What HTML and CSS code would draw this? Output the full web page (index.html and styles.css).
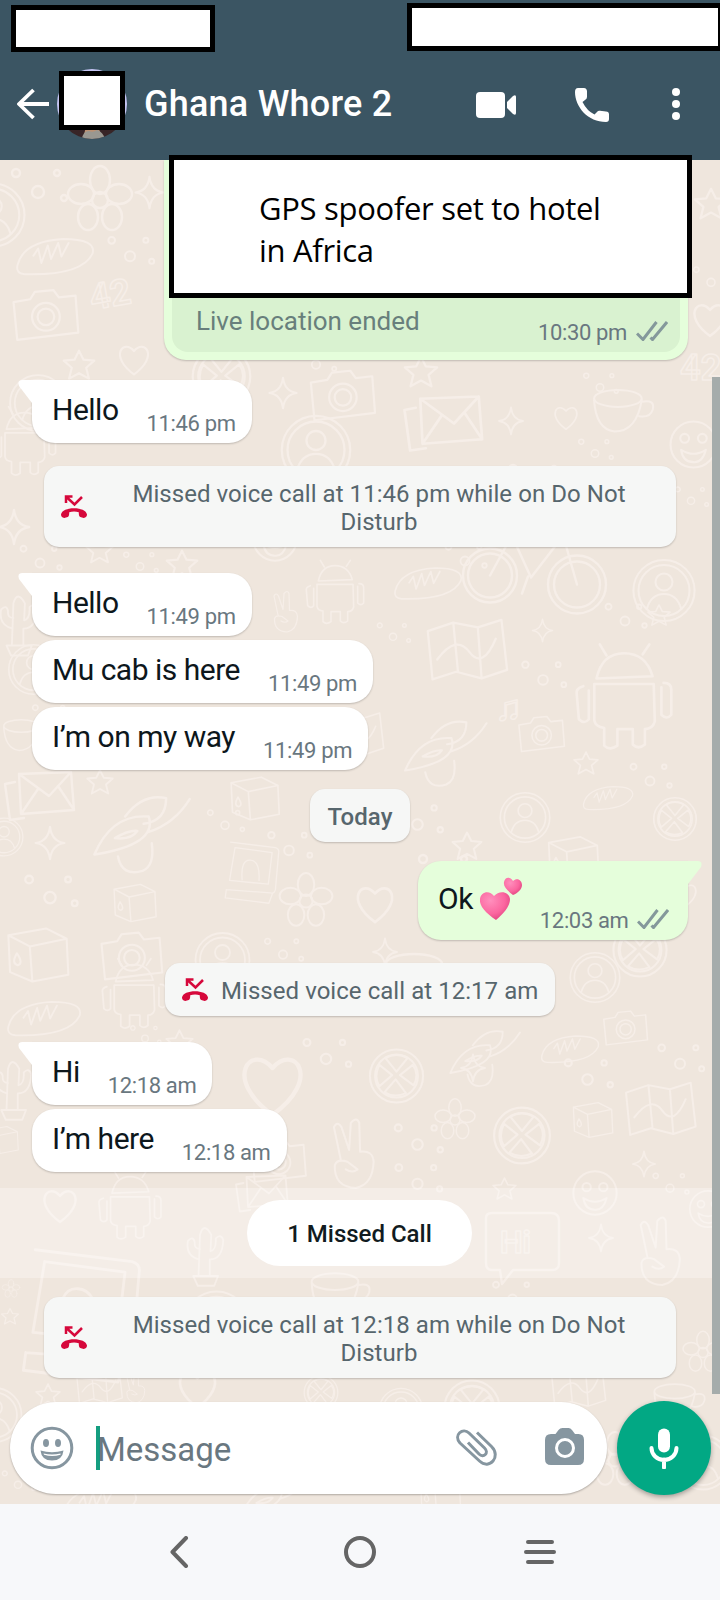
FILE: index.html
```html
<!DOCTYPE html>
<html lang="en">
<head>
<meta charset="utf-8">
<title>Chat</title>
<link rel="stylesheet" href="styles.css">
</head>
<body>
<svg class="defs" width="0" height="0" aria-hidden="true">
  <symbol id="ticks" viewBox="0 0 32 20" overflow="visible"><path d="M1 12.5l6 6L20.500 1M14.500 16.500l2 2L31 1" fill="none" stroke="#84989b" stroke-width="3"/></symbol>
  <symbol id="missed" viewBox="0 0 26 23"><path d="M5 8V1.500h6.500M5.500 2l8 7.500L21 2" fill="none" stroke="#d6083b" stroke-width="2.500"/><path d="M0 19.500C1 11 25 11 26 19.500c.1 2-1.500 3.500-3.300 3.400l-3.400-1c-1.300-.5-1.600-2.500-1.500-4.700-3-1-6.500-1-9.600 0 .1 2.200-.2 4.200-1.500 4.700l-3.400 1C1.500 23-.1 21.500 0 19.500z" fill="#d6083b"/></symbol>
  <symbol id="star" viewBox="0 0 40 40" overflow="visible"><path d="M20 3l5 10 12 1-9 8 3 12-11-6-11 6 3-12-9-8 12-1z"/></symbol>
  <symbol id="spark" viewBox="0 0 40 40" overflow="visible"><path d="M20 2q2 16 16 18-14 2-16 18-2-16-16-18 14-2 16-18z"/></symbol>
  <symbol id="heart" viewBox="0 0 40 40" overflow="visible"><path d="M20 36C-8 16 8-4 20 10 32-4 48 16 20 36z"/></symbol>
  <symbol id="dots" viewBox="0 0 60 40" overflow="visible"><circle cx="8" cy="9" r="4"/><circle cx="30" cy="28" r="6"/><circle cx="49" cy="9" r="3"/><circle cx="56" cy="34" r="3"/></symbol>
  <symbol id="mail" viewBox="0 0 80 60" overflow="visible"><path d="M18 12l52-2 3 38-53 4zM18 12l30 22L70 10M20 52l17-25M73 48L57 24M14 20l-10 2 5 36 14-2"/></symbol>
  <symbol id="cup" viewBox="0 0 80 60" overflow="visible"><ellipse cx="34" cy="14" rx="28" ry="10"/><path d="M6 16q2 34 24 37 26 0 32-37M62 18q16-3 13 9-3 10-16 8"/></symbol>
  <symbol id="plane" viewBox="0 0 100 80" overflow="visible"><path d="M5 60Q22 20 58 23q9 27-53 37zM35 23Q52 0 75 5q0 22-22 25M58 38q25-8 40-32M28 62q4 20 24 14 12-5 9-27"/><path d="M25 44q14-8 22-7-6 9-22 7z"/></symbol>
  <symbol id="face" viewBox="0 0 60 60" overflow="visible"><circle cx="30" cy="30" r="26"/><circle cx="20" cy="23" r="5"/><circle cx="40" cy="23" r="5"/><path d="M16 36q14 9 28 0-4 15-14 14-12 0-14-14z"/></symbol>
  <symbol id="bike" viewBox="0 0 150 90" overflow="visible"><circle cx="30" cy="48" r="27"/><circle cx="30" cy="48" r="22"/><circle cx="117" cy="57" r="29"/><circle cx="117" cy="57" r="23"/><path d="M30 48l18-33h50L71 50 55 15M117 57L102 4l18-2M68 49l-6 17"/></symbol>
  <symbol id="ring" viewBox="0 0 80 80" overflow="visible"><circle cx="40" cy="40" r="36"/><circle cx="40" cy="40" r="30"/><circle cx="40" cy="30" r="10"/><path d="M20 61q5-17 20-17t20 17"/></symbol>
  <symbol id="box" viewBox="0 0 80 70" overflow="visible"><path d="M6 12l44-8 24 12 2 42-42 8L8 55zM6 12l25 13 43-9M31 25l3 41"/><path d="M16 33q8 12 1 14-8-2-1-14z"/></symbol>
  <symbol id="map" viewBox="0 0 90 70" overflow="visible"><path d="M4 14l27-9 26 5 25-8 6 53-27 9-27-7-25 8zM31 5l5 52M57 10l4 54M14 44q20-27 34-8t28-14"/></symbol>
  <symbol id="camera" viewBox="0 0 80 60" overflow="visible"><path d="M6 16l18-3 5-8 20-2 6 8 18-2 3 40-66 8z"/><circle cx="41" cy="32" r="15"/><circle cx="41" cy="32" r="9"/></symbol>
  <symbol id="flower" viewBox="0 0 80 80" overflow="visible"><circle cx="40" cy="40" r="8"/><ellipse cx="40" cy="20" rx="10" ry="14"/><ellipse cx="59" cy="34" rx="13" ry="10"/><ellipse cx="52" cy="57" rx="10" ry="13"/><ellipse cx="28" cy="57" rx="10" ry="13"/><ellipse cx="21" cy="34" rx="13" ry="10"/></symbol>
  <symbol id="hand" viewBox="0 0 60 90" overflow="visible"><path d="M16 50L8 12q4-8 9 0l9 27 2-32q7-8 10 0l1 34q15-2 16 12-1 27-21 31Q8 83 9 57q3-8 15-4l12 9q-6 5-14 0"/></symbol>
  <symbol id="android" viewBox="0 0 90 100" overflow="visible"><path d="M20 35q5-23 25-23t26 21zM18 40h54l1 34q-2 7-9 7v14q-6 5-11 0V81H39v15q-7 5-12 0V80q-8-1-9-7zM8 42q-7 2-6 7l2 23q5 5 9 0V46M81 39q7 0 7 6v23q-4 5-9 0V43M29 14L23 4M62 13l6-9"/></symbol>
  <symbol id="frame" viewBox="0 0 100 110" overflow="visible"><path d="M10 4l82 10q7 2 6 9l-6 68q-2 8-9 6L2 91M18 14l68 9-7 58L8 74zM31 73q-3-37 15-36t16 37M2 91l-2 15 80 10 7-19"/></symbol>
  <symbol id="fruit" viewBox="0 0 70 70" overflow="visible"><circle cx="35" cy="35" r="31"/><circle cx="35" cy="35" r="25"/><path d="M35 30L22 14q13-7 26 0zM39 34l15-12q8 11 1 24zM34 39l12 16q-13 6-25-1zM30 34L15 47q-7-11 0-25z"/></symbol>
  <symbol id="bread" viewBox="0 0 100 50" overflow="visible"><path d="M3 38Q10 8 60 5q42 0 37 18Q84 51 12 49 1 48 3 38zM23 26l6-9 4 18 8-22 4 17 9-20 4 17 9-17"/></symbol>
  <symbol id="cactus" viewBox="0 0 60 80" overflow="visible"><path d="M22 72L24 17q5-18 15 0l-1 22q8-2 7-17 7-7 10 2-1 26-18 26v22zM23 50Q4 45 8 25q7-7 9 2-1 9 7 9M15 72h33l-5 13H21z"/></symbol>
</svg>

<main class="screen">
  <svg class="wallpaper" viewBox="0 0 720 1344" aria-hidden="true">
    <use href="#flower" x="60" y="0" width="80" height="80"/><use href="#dots" x="8" y="4" width="60" height="40"/><use href="#spark" x="132" y="15" width="35" height="35"/><use href="#ring" x="-42" y="15" width="70" height="80"/><use href="#bread" x="15" y="70" width="80" height="50"/><use href="#dots" x="105" y="72" width="50" height="35"/>
    <text class="doodle-text" x="92" y="150" transform="rotate(-10 92 150)">42</text><use href="#camera" x="8" y="125" width="74" height="60"/><use href="#heart" x="115" y="182" width="38" height="36"/><use href="#star" x="61" y="188" width="36" height="36"/><use href="#ring" x="7" y="208" width="62" height="70"/><use href="#star" x="692" y="26" width="38" height="38"/><use href="#dots" x="691" y="98" width="40" height="38"/><use href="#heart" x="690" y="140" width="40" height="40"/>
    <use href="#fruit" x="189" y="184" width="65" height="65"/><use href="#spark" x="266" y="214" width="34" height="38"/><use href="#dots" x="295" y="184" width="42" height="30"/><use href="#camera" x="300" y="208" width="84" height="55"/><use href="#ring" x="276" y="252" width="80" height="76"/><use href="#star" x="402" y="194" width="38" height="38"/><use href="#mail" x="400" y="220" width="90" height="78"/><use href="#spark" x="496" y="246" width="30" height="30"/><use href="#cup" x="589" y="225" width="68" height="54"/><use href="#heart" x="550" y="244" width="32" height="28"/><use href="#face" x="667" y="258" width="53" height="53"/><use href="#dots" x="575" y="210" width="50" height="25"/><use href="#dots" x="568" y="276" width="54" height="25"/><text class="doodle-text" x="680" y="220">42</text>
    <use href="#android" x="-8" y="240" width="65" height="80"/><use href="#spark" x="-5" y="346" width="38" height="42"/><use href="#dots" x="10" y="382" width="60" height="30"/><use href="#star" x="84" y="376" width="31" height="31"/><use href="#star" x="164" y="388" width="36" height="36"/><use href="#dots" x="121" y="389" width="38" height="25"/><use href="#face" x="250" y="352" width="50" height="54"/><use href="#android" x="305" y="391" width="60" height="80"/><use href="#bread" x="393" y="402" width="70" height="40"/><use href="#bike" x="460" y="360" width="150" height="105"/><use href="#ring" x="630" y="393" width="68" height="75"/><use href="#star" x="646" y="443" width="26" height="26"/><use href="#dots" x="673" y="316" width="36" height="40"/><use href="#hand" x="269" y="430" width="32" height="45"/>
    <use href="#map" x="424" y="455" width="85" height="72"/><use href="#spark" x="530" y="458" width="25" height="25"/><use href="#android" x="570" y="480" width="108" height="110"/><use href="#camera" x="515" y="552" width="52" height="44"/><use href="#plane" x="397" y="558" width="95" height="70"/><use href="#dots" x="519" y="496" width="48" height="35"/><use href="#dots" x="375" y="460" width="36" height="24"/><use href="#cactus" x="-5" y="426" width="46" height="70"/><use href="#ring" x="6" y="482" width="55" height="55"/><use href="#cup" x="0" y="555" width="50" height="42"/><text class="doodle-text" x="495" y="560">♫</text>
    <use href="#mail" x="0" y="602" width="82" height="60"/><use href="#star" x="85" y="608" width="30" height="30"/><use href="#plane" x="78" y="633" width="125" height="82"/><use href="#ring" x="-20" y="656" width="48" height="42"/><use href="#spark" x="32" y="665" width="36" height="36"/><use href="#box" x="227" y="607" width="55" height="63"/><use href="#dots" x="205" y="640" width="40" height="40"/><use href="#dots" x="264" y="668" width="50" height="32"/><use href="#star" x="450" y="670" width="34" height="34"/><use href="#ring" x="495" y="630" width="60" height="55"/><use href="#box" x="543" y="674" width="60" height="50"/><use href="#fruit" x="651" y="635" width="48" height="48"/><use href="#bread" x="582" y="622" width="52" height="30"/><use href="#map" x="325" y="540" width="60" height="70"/>
    <use href="#box" x="102" y="722" width="65" height="42"/><use href="#dots" x="20" y="711" width="60" height="38"/><use href="#frame" x="220" y="680" width="65" height="60"/><use href="#flower" x="273" y="706" width="66" height="70"/><use href="#heart" x="353" y="722" width="44" height="45"/><use href="#box" x="0" y="765" width="75" height="60"/><use href="#camera" x="96" y="770" width="70" height="52"/><use href="#ring" x="190" y="770" width="65" height="60"/><use href="#dots" x="260" y="775" width="46" height="28"/><use href="#spark" x="370" y="777" width="30" height="30"/><use href="#fruit" x="610" y="760" width="60" height="60"/><use href="#heart" x="671" y="716" width="28" height="39"/><use href="#bread" x="0" y="838" width="88" height="38"/><use href="#android" x="101" y="790" width="66" height="85"/><use href="#dots" x="127" y="863" width="36" height="22"/><use href="#star" x="164" y="868" width="31" height="31"/>
    <use href="#ring" x="565" y="790" width="60" height="55"/><use href="#camera" x="600" y="848" width="50" height="40"/><use href="#plane" x="444" y="868" width="80" height="60"/><use href="#fruit" x="365" y="886" width="63" height="60"/><use href="#heart" x="235" y="890" width="75" height="72"/><use href="#dots" x="300" y="872" width="52" height="40"/><use href="#cactus" x="-10" y="896" width="45" height="60"/><use href="#map" x="617" y="921" width="86" height="58"/><use href="#fruit" x="487" y="944" width="70" height="63"/><use href="#spark" x="458" y="893" width="30" height="30"/><use href="#box" x="-15" y="950" width="35" height="60"/><use href="#hand" x="324" y="957" width="57" height="76"/><use href="#camera" x="247" y="976" width="62" height="50"/><use href="#dots" x="390" y="1000" width="55" height="34"/><use href="#face" x="570" y="1008" width="50" height="50"/><use href="#star" x="491" y="1016" width="27" height="27"/>
    <use href="#heart" x="40" y="1025" width="40" height="42"/><use href="#android" x="90" y="1008" width="80" height="72"/><use href="#mail" x="228" y="1008" width="70" height="45"/><use href="#frame" x="0" y="1085" width="165" height="130"/><use href="#cactus" x="172" y="1062" width="65" height="60"/><use href="#flower" x="0" y="1110" width="22" height="38"/><path d="M486 1058q0-5 6-5h59q8 0 8 8v42q0 7-7 7h-39l-11 14-2-14h-8q-6 0-6-7z"/><text class="doodle-text hi" x="500" y="1093">Hi</text><use href="#spark" x="586" y="1063" width="30" height="30"/><use href="#hand" x="629" y="1055" width="60" height="75"/><use href="#star" x="0" y="1145" width="20" height="24"/><use href="#dots" x="480" y="1118" width="65" height="30"/><use href="#ring" x="174" y="1128" width="85" height="70"/><use href="#cup" x="300" y="1110" width="80" height="50"/><use href="#flower" x="678" y="1165" width="50" height="55"/><use href="#face" x="683" y="1028" width="50" height="42"/>
    <use href="#star" x="34" y="1222" width="28" height="28"/><use href="#map" x="69" y="1208" width="60" height="38"/><use href="#hand" x="115" y="1210" width="40" height="35"/><use href="#ring" x="-38" y="1225" width="65" height="60"/><use href="#heart" x="175" y="1207" width="45" height="45"/><use href="#fruit" x="302" y="1210" width="38" height="45"/><use href="#ring" x="377" y="1225" width="48" height="50"/><use href="#fruit" x="438" y="1217" width="68" height="62"/><use href="#map" x="535" y="1205" width="86" height="45"/><use href="#cup" x="650" y="1220" width="58" height="46"/><use href="#flower" x="582" y="1265" width="66" height="70"/><use href="#bread" x="55" y="1323" width="90" height="38"/><use href="#dots" x="0" y="1305" width="36" height="30"/><use href="#plane" x="230" y="1310" width="90" height="60"/><use href="#box" x="400" y="1315" width="80" height="40"/><use href="#ring" x="673" y="1270" width="60" height="65"/>
    <use href="#dots" x="440" y="380" width="50" height="30"/><use href="#dots" x="600" y="440" width="50" height="30"/><use href="#dots" x="390" y="640" width="55" height="35"/><use href="#cup" x="380" y="790" width="0" height="0"/><use href="#dots" x="30" y="540" width="40" height="30"/><use href="#dots" x="560" y="895" width="55" height="35"/><use href="#bread" x="540" y="870" width="60" height="36"/><use href="#dots" x="390" y="960" width="55" height="35"/><use href="#dots" x="655" y="880" width="50" height="34"/><use href="#flower" x="430" y="935" width="50" height="50"/><use href="#dots" x="505" y="300" width="0" height="0"/><use href="#box" x="570" y="935" width="45" height="50"/><use href="#dots" x="415" y="690" width="0" height="0"/><use href="#spark" x="630" y="990" width="28" height="28"/><use href="#dots" x="650" y="1010" width="40" height="26"/><use href="#star" x="572" y="590" width="28" height="28"/><use href="#dots" x="620" y="600" width="60" height="30"/>
  </svg>

  <header class="topbar">
    <div class="status"><div class="mask mask-left"></div><div class="mask mask-right"></div></div>
    <div class="contact">
      <svg class="back" viewBox="0 0 32 32"><path d="M16.500 2L2 16l14.500 14M2 16h30" fill="none" stroke="#fff" stroke-width="3.800" stroke-linejoin="round"/></svg>
      <div class="avatar">
        <svg viewBox="0 0 70 70"><clipPath id="round"><circle cx="35" cy="35" r="35"/></clipPath><g clip-path="url(#round)"><path fill="#c4c4f3" d="M0 0h70v60H0z"/><path fill="#382527" d="M8 45h54v25H8z"/><path fill="#be9273" d="M29 57h12l3 9H27z"/><path fill="#9a9891" d="M25 70q1-8 7-8 4 2 8-1 6 2 8 9z"/></g></svg>
        <div class="mask avatar-mask"></div>
      </div>
      <h1 class="name">Ghana Whore 2</h1>
      <svg class="video" viewBox="0 0 40 26"><rect width="29" height="26" rx="4" fill="#fff"/><path d="M31 10l6-6q3-2 3 1v16q0 3-3 1l-6-6z" fill="#fff"/></svg>
      <svg class="phone" viewBox="0 0 34 34"><path d="M3 0h6q2.500 0 3 3v6q0 2-2 3l-2.500 2q4.500 9 12 12.500L22 24q1-1.500 3-1.200l6 .7q3 .2 3 3V31q0 3-3 3C13 34 0 19 0 4q0-4 3-4z" fill="#fff"/></svg>
      <svg class="more" viewBox="0 0 8 32"><g fill="#fff"><circle cx="4" cy="4" r="4"/><circle cx="4" cy="16" r="4"/><circle cx="4" cy="28" r="4"/></g></svg>
    </div>
  </header>

  <section class="chat">
    <div class="location">
      <div class="location-body">
        <span class="ended">Live location ended</span>
        <span class="time">10:30 pm</span><svg class="ticks"><use href="#ticks"/></svg>
      </div>
      <p class="note">GPS spoofer set to hotel<br>in Africa</p>
    </div>
    <div class="bubble tail g20"><span class="text">Hello</span><span class="time">11:46 pm</span></div>
    <div class="notice wide g23"><svg class="missed"><use href="#missed"/></svg><p>Missed voice call at 11:46 pm while on Do Not Disturb</p></div>
    <div class="bubble tail g26"><span class="text">Hello</span><span class="time">11:49 pm</span></div>
    <div class="bubble g4"><span class="text">Mu cab is here</span><span class="time">11:49 pm</span></div>
    <div class="bubble g4"><span class="text">I’m on my way</span><span class="time">11:49 pm</span></div>
    <div class="notice day">Today</div>
    <div class="bubble sent">
      <span class="text">Ok</span>
      <svg class="hearts" viewBox="0 0 43 44" role="img" aria-label="💕"><defs><radialGradient id="pink" cx=".35" cy=".3" r=".8"><stop offset="0" stop-color="#ff8fbd"/><stop offset=".6" stop-color="#fb669f"/><stop offset="1" stop-color="#dc3e7c"/></radialGradient></defs><path d="M17 43C7 36 0 29 1 22c1-8 10-9 14-3 5-6 15-5 16 3 0 8-7 15-14 21z" fill="url(#pink)"/><path d="M34 18c-5-4-10-8-9-13 1-5 6-6 9-1 4-4 9-1 9 4 0 4-4 8-9 10z" fill="url(#pink)"/></svg>
      <span class="time">12:03 am</span><svg class="ticks"><use href="#ticks"/></svg>
    </div>
    <div class="notice short"><svg class="missed"><use href="#missed"/></svg><p>Missed voice call at 12:17 am</p></div>
    <div class="bubble tail g26"><span class="text">Hi</span><span class="time">12:18 am</span></div>
    <div class="bubble g4"><span class="text">I’m here</span><span class="time">12:18 am</span></div>
    <div class="unread"><span class="unread-pill">1 Missed Call</span></div>
    <div class="notice wide g19"><svg class="missed"><use href="#missed"/></svg><p>Missed voice call at 12:18 am while on Do Not Disturb</p></div>
    <div class="scrollbar"></div>
  </section>

  <div class="composer">
    <div class="field">
      <svg class="smile" viewBox="0 0 44 44"><circle cx="22" cy="22" r="19.800" fill="none" stroke="#8696a0" stroke-width="3"/><g fill="#8696a0"><ellipse cx="16" cy="17" rx="3" ry="4"/><ellipse cx="28" cy="17" rx="3" ry="4"/></g><path d="M10.500 24.500q11.500 3.500 23 0-1 10-11.500 10T10.500 24.500z" fill="#8696a0"/><path d="M13.500 27.500q8.500 2 17 0v1.200q-8.500 2.500-16.500 0z" fill="#fff"/></svg>
      <div class="caret"></div><span class="placeholder">Message</span>
      <svg class="clip" viewBox="0 0 42 38"><path d="M21 3.500l14.500 14c10 10-2 24-12 14.500L4 14C-3 6 7-2 13 4l15.500 15c5 5-1 10.500-5.500 6L12 13.500" fill="none" stroke="#8696a0" stroke-width="3" stroke-linejoin="round"/></svg>
      <svg class="cam" viewBox="0 0 40 37"><path d="M6 6h4.500l3-4q1.500-2 4-2h6q2 0 3.500 2l3 4h3.500q5.500 0 5.500 6v19q0 6-6 6H6q-6 0-6-6V12q0-6 6-6z" fill="#8696a0"/><circle cx="20" cy="20" r="8.500" fill="#8696a0" stroke="#fff" stroke-width="3"/></svg>
    </div>
    <div class="mic"><svg viewBox="0 0 30 40"><rect x="9" width="12" height="24" rx="6" fill="#fff"/><path d="M2.500 19.500a12.500 12 0 0 0 25 0M15 31v8" fill="none" stroke="#fff" stroke-width="4" stroke-linecap="round"/></svg></div>
  </div>

  <nav class="navbar">
    <svg viewBox="0 0 32 32"><path d="M22 2L8.500 16 22 30" /></svg>
    <svg viewBox="0 0 32 32"><circle cx="16" cy="16" r="14"/></svg>
    <svg viewBox="0 0 32 32"><path d="M4 6h24M2 16h28M4 26h24"/></svg>
  </nav>
</main>
</body>
</html>
```
FILE: styles.css
```css
* { box-sizing: border-box; }
body { margin: 0; font-family: Roboto, sans-serif; }
h1, p { margin: 0; }
svg { display: block; flex: none; }
.defs { position: absolute; }

.screen { position: relative; isolation: isolate; width: 720px; height: 1600px; display: flex; flex-direction: column; overflow: hidden; background: #efe6dd; }
.wallpaper { position: absolute; z-index: -1; left: 0; top: 160px; width: 720px; height: 1344px; fill: none; stroke: #f6eee8; stroke-width: 2.4; stroke-linejoin: round; stroke-linecap: round; }
.doodle-text { font: bold 36px Roboto, sans-serif; stroke-width: 1.5px; }
.hi { font-size: 32px; }

.topbar { height: 160px; flex: none; background: #3b5563; }
.mask { background: #fff; border: 5px solid #000; flex: none; }
.status { height: 56px; display: flex; align-items: flex-start; padding: 3px 0 0 11px; }
.mask-left { width: 204px; height: 47px; margin-top: 2px; }
.mask-right { width: 316px; height: 48px; margin-left: 192px; }
.contact { height: 96px; display: flex; align-items: center; padding-left: 17px; }
.back { width: 32px; height: 32px; }
.avatar { width: 70px; height: 70px; margin-left: 8px; position: relative; }
.avatar-mask { position: absolute; left: 2px; top: 2px; width: 66px; height: 59px; }
.name { width: 279px; margin-left: 17px; font-size: 36px; font-weight: 500; line-height: 42px; letter-spacing: .22px; color: #fff; white-space: nowrap; }
.video { width: 40px; height: 26px; margin: 2px 0 0 53px; }
.phone { width: 34px; height: 34px; margin: 2px 0 0 59px; }
.more { width: 8px; height: 32px; margin-left: 63px; }

.chat { position: relative; height: 1234px; flex: none; display: flex; flex-direction: column; align-items: flex-start; }
.location { position: relative; width: 524px; height: 200px; margin-left: 164px; padding: 0 8px 8px; flex: none; background: #e5fedb; border-radius: 0 0 22px 22px; box-shadow: 0 1px 2px #0003; }
.location-body { height: 192px; display: flex; align-items: flex-end; padding: 0 12px 6px 24px; background: #d9f2d0; border-radius: 0 0 16px 16px; color: #687f7c; }
.ended { flex: 1; font-size: 26px; line-height: 30px; margin-bottom: 10px; }
.note { position: absolute; left: 5px; top: -5px; width: 523px; height: 143px; padding: 27px 0 0 85px; border: 5px solid #000; background: #fff; color: #000; font: 31px/42px "Open Sans", sans-serif; letter-spacing: -.3px; white-space: nowrap; }
.time { font-size: 22px; line-height: 26px; letter-spacing: -.35px; color: #697780; white-space: nowrap; }
.ticks { width: 32px; height: 20px; margin: 0 0 5px 9px; }

.bubble { position: relative; height: 63px; flex: none; display: flex; align-items: flex-end; margin-left: 32px; padding: 0 16px 6px 20px; border-radius: 23px; background: #fff; box-shadow: 0 1px 2px #0003; }
.bubble .text { font-size: 30px; line-height: 36px; margin: 0 28px 9px 0; letter-spacing: -.5px; color: #0d171c; white-space: nowrap; }
.tail { border-top-left-radius: 0; }
.tail::before { content: ""; position: absolute; left: -14px; top: 0; width: 15px; height: 23px; background: #fff; clip-path: path("M4 0H15V23H14L1 6Q-1 0 4 0Z"); }
.g4 { margin-top: 4px; }
.g19 { margin-top: 19px; }
.g20 { margin-top: 20px; }
.g23 { margin-top: 23px; }
.g26 { margin-top: 26px; }

.notice { display: flex; flex: none; align-items: center; background: #f6f7f6; border-radius: 15px; box-shadow: 0 1px 2px #0003; color: #57666d; font-size: 24px; line-height: 28px; letter-spacing: .05px; }
.wide { width: 632px; height: 81px; margin-left: 44px; padding: 0 17px; }
.wide p { flex: 1; margin-left: 12px; padding: 2px 20px 0; text-align: center; }
.missed { width: 26px; height: 23px; }
.day { width: 100px; height: 53px; margin: 19px 0 0 310px; padding-top: 2px; justify-content: center; font-weight: 500; }
.short { width: 390px; height: 53px; margin: 23px 0 0 165px; padding-left: 17px; }
.short p { margin-left: 13px; padding-top: 2px; white-space: nowrap; }

.sent { width: 270px; height: 79px; margin: 19px 0 0 418px; background: #e5fedb; border-top-right-radius: 0; }
.sent .text { margin: 0 6px 17px 0; }
.sent .hearts { width: 43px; height: 44px; margin-bottom: 13px; }
.sent .time { margin-left: 18px; }
.sent .ticks { margin-left: 8px; }
.sent::after { content: ""; position: absolute; right: -14px; top: 0; width: 15px; height: 23px; background: #e5fedb; clip-path: path("M0 0H11Q16 0 14 6L1 23H0Z"); }

.unread { width: 712px; height: 90px; margin-top: 16px; flex: none; display: flex; align-items: center; justify-content: center; padding: 0 0 0 7px; background: #ffffff4d; }
.unread-pill { width: 225px; height: 66px; border-radius: 33px; background: #fff; text-align: center; font-size: 24px; font-weight: 500; line-height: 69px; color: #111b21; }
.scrollbar { position: absolute; right: 0; top: 217px; width: 8px; height: 1017px; background: #a5acab; }

.composer { height: 110px; flex: none; display: flex; align-items: flex-start; padding: 7px 9px 0 10px; }
.field { width: 597px; height: 92px; margin: 1px 10px 0 0; display: flex; align-items: center; padding-left: 20px; border-radius: 46px; background: #fff; box-shadow: 0 1px 2px #0004; }
.smile { width: 44px; height: 44px; }
.caret { width: 4px; height: 44px; margin-left: 22px; background: #149e80; }
.placeholder { flex: none; width: 359px; margin-left: -3px; padding-top: 4px; font-size: 33px; line-height: 40px; color: #697780; }
.clip { width: 42px; height: 38px; }
.cam { width: 40px; height: 37px; margin: 0 0 4px 47px; }
.mic { width: 94px; height: 94px; flex: none; display: flex; align-items: center; justify-content: center; border-radius: 50%; background: #02a884; box-shadow: 0 2px 5px #0005; }
.mic svg { width: 30px; height: 41px; }

.navbar { height: 96px; flex: none; display: flex; justify-content: space-between; align-items: center; padding: 0 164px 0 164px; background: #f7f8fa; }
.navbar svg { width: 32px; height: 32px; fill: none; stroke: #656565; stroke-width: 4; stroke-linecap: round; stroke-linejoin: round; }
```
